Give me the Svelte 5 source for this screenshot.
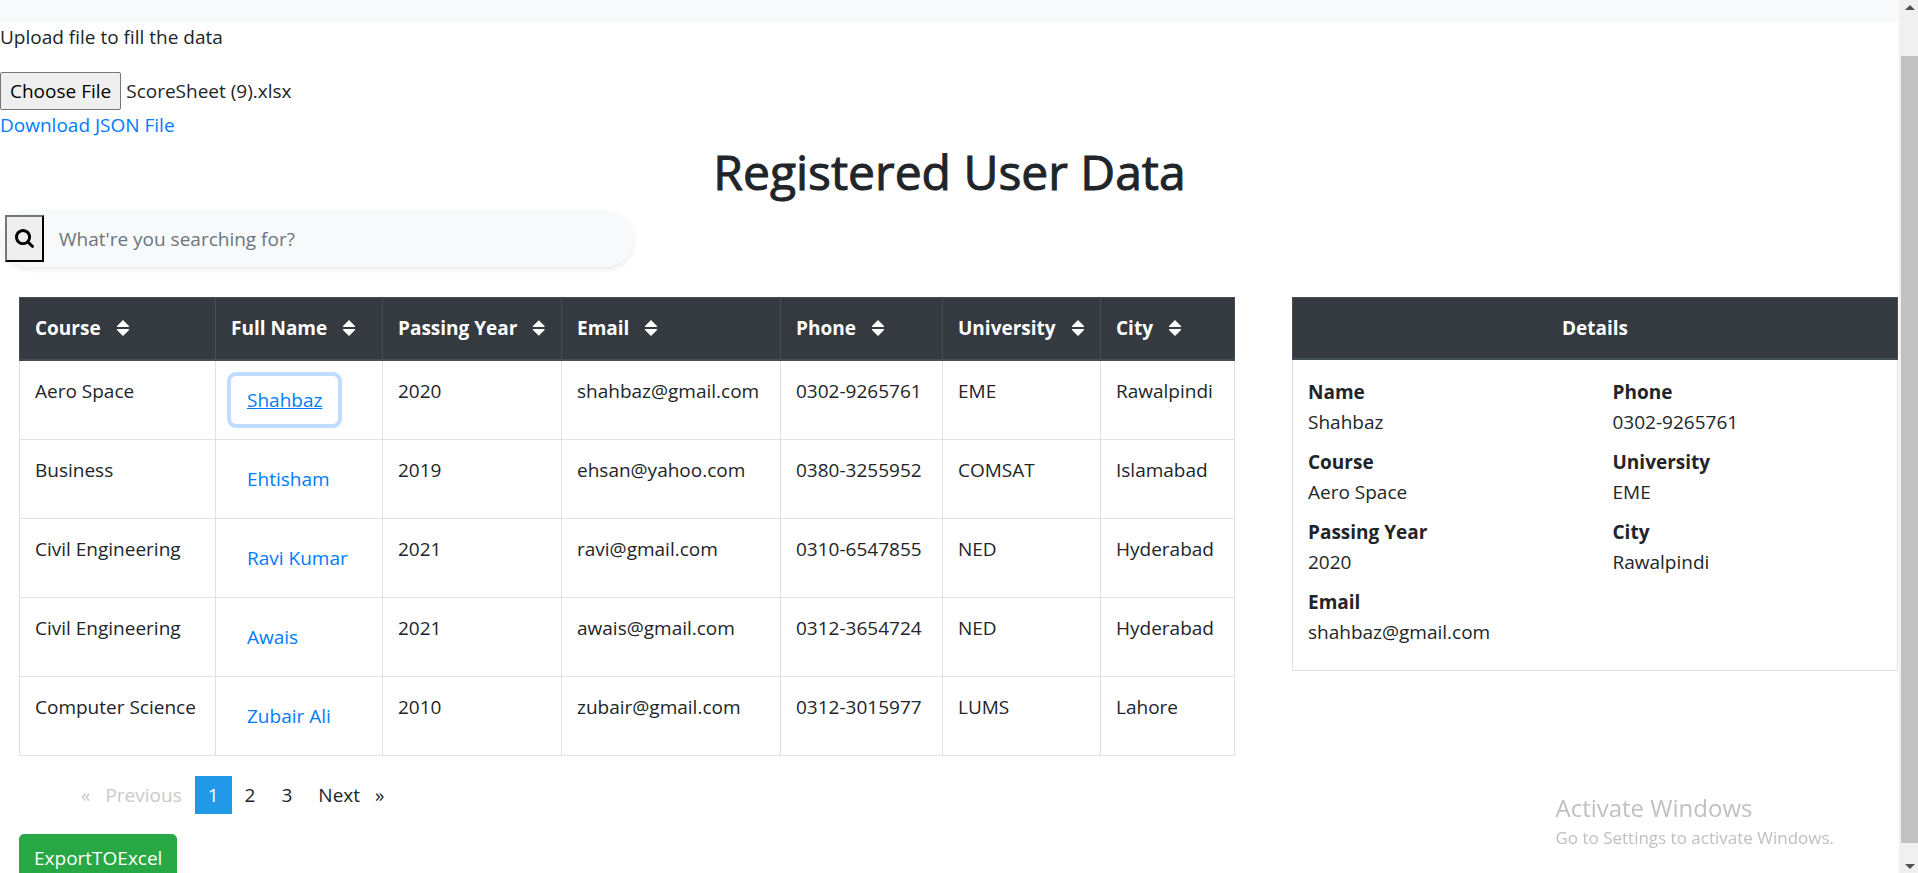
<script>
  import { onMount } from 'svelte';

  const columns = ['Course', 'Full Name', 'Passing Year', 'Email', 'Phone', 'University', 'City'];

  const users = [
    { course: 'Aero Space', name: 'Shahbaz', year: '2020', email: 'shahbaz@gmail.com', phone: '0302-9265761', university: 'EME', city: 'Rawalpindi' },
    { course: 'Business', name: 'Ehtisham', year: '2019', email: 'ehsan@yahoo.com', phone: '0380-3255952', university: 'COMSAT', city: 'Islamabad' },
    { course: 'Civil Engineering', name: 'Ravi Kumar', year: '2021', email: 'ravi@gmail.com', phone: '0310-6547855', university: 'NED', city: 'Hyderabad' },
    { course: 'Civil Engineering', name: 'Awais', year: '2021', email: 'awais@gmail.com', phone: '0312-3654724', university: 'NED', city: 'Hyderabad' },
    { course: 'Computer Science', name: 'Zubair Ali', year: '2010', email: 'zubair@gmail.com', phone: '0312-3015977', university: 'LUMS', city: 'Lahore' }
  ];

  let selectedIndex = $state(0);
  let page = $state(1);
  let query = $state('');
  let fileInput;

  const selected = $derived(users[selectedIndex]);

  const details = $derived([
    ['Name', selected.name],
    ['Phone', selected.phone],
    ['Course', selected.course],
    ['University', selected.university],
    ['Passing Year', selected.year],
    ['City', selected.city],
    ['Email', selected.email]
  ]);

  onMount(() => {
    const transfer = new DataTransfer();
    transfer.items.add(new File([''], 'ScoreSheet (9).xlsx'));
    fileInput.files = transfer.files;
  });
</script>

<div class="window">
  <main class="page">
    <div class="topbar"></div>

    <section class="upload">
      <label for="sheet">Upload file to fill the data</label>
      <input id="sheet" type="file" bind:this={fileInput} />
      <a class="download" href="#json">Download JSON File</a>
    </section>

    <h1>Registered User Data</h1>

    <form class="search" onsubmit={(e) => e.preventDefault()}>
      <button type="submit" aria-label="Search">
        <svg viewBox="0 0 1664 1664" width="19" height="19" aria-hidden="true">
          <path d="M1152 704q0-185-131.500-316.500T704 256 387.500 387.500 256 704t131.500 316.500T704 1152t316.500-131.500T1152 704zm512 832q0 52-38 90t-90 38q-54 0-90-38l-343-342q-179 124-399 124-143 0-273.500-55.500t-225-150-150-225T0 704t55.500-273.500 150-225 225-150T704 0t273.500 55.500 225 150 150 225T1408 704q0 220-124 399l343 343q37 37 37 90z" />
        </svg>
      </button>
      <input type="search" aria-label="Search users" placeholder="What're you searching for?" bind:value={query} />
    </form>

    <div class="content">
      <section class="list">
        <table class="users">
          <colgroup>
            {#each columns as column (column)}<col />{/each}
          </colgroup>
          <thead>
            <tr>
              {#each columns as column (column)}
                <th>
                  <span class="sortable">
                    {column}
                    <svg viewBox="0 0 14 16" width="14" height="16" aria-hidden="true">
                      <path d="M7 0 13 6Q13.400 7 12.500 7H1.500Q.600 7 1 6ZM7 16 13 10Q13.400 9 12.500 9H1.500Q.600 9 1 10Z" />
                    </svg>
                  </span>
                </th>
              {/each}
            </tr>
          </thead>
          <tbody>
            {#each users as user, index (user.phone)}
              <tr>
                <td>{user.course}</td>
                <td>
                  <button class="name" class:active={index === selectedIndex} onclick={() => (selectedIndex = index)}>{user.name}</button>
                </td>
                <td>{user.year}</td>
                <td>{user.email}</td>
                <td>{user.phone}</td>
                <td>{user.university}</td>
                <td>{user.city}</td>
              </tr>
            {/each}
          </tbody>
        </table>

        <nav class="pagination" aria-label="Pages">
          <button class="step" disabled><span class="mark">«</span>Previous</button>
          {#each [1, 2, 3] as number (number)}
            <button class:current={number === page} onclick={() => (page = number)}>{number}</button>
          {/each}
          <button class="step">Next<span class="mark">»</span></button>
        </nav>

        <button class="export">ExportTOExcel</button>
      </section>

      <section class="card">
        <h2>Details</h2>
        <dl>
          {#each details as [term, value] (term)}
            <div>
              <dt>{term}</dt>
              <dd>{value}</dd>
            </div>
          {/each}
        </dl>
      </section>
    </div>
  </main>

  <div class="scrollbar" aria-hidden="true">
    <svg viewBox="0 0 10 5" width="10" height="5"><path d="M5 0 10 5H0Z" /></svg>
    <div class="thumb"></div>
    <svg viewBox="0 0 10 5" width="10" height="5"><path d="M0 0H10L5 5Z" /></svg>
  </div>

  <aside class="watermark">
    <strong>Activate Windows</strong>
    <span>Go to Settings to activate Windows.</span>
  </aside>
</div>

<style>
  :global(body) {
    margin: 0;
    background: #fff;
  }

  .window,
  .window * {
    box-sizing: border-box;
  }

  .window {
    display: flex;
    height: 100vh;
    overflow: hidden;
    color: #212529;
    font: 400 19px/30px 'Open Sans', 'Noto Sans', sans-serif;
  }

  button,
  input {
    font: inherit;
  }

  .page {
    flex: 1;
    min-width: 0;
    overflow: hidden;
  }

  .topbar {
    height: 22px;
    background: #f8f9fa;
  }

  .upload {
    display: flex;
    flex-direction: column;
    align-items: flex-start;
  }

  .upload label {
    margin-bottom: 20px;
  }

  .upload input {
    width: 420px;
    height: 38px;
    color: #212529;
  }

  .upload input::file-selector-button {
    height: 38px;
    margin: 0 5px 0 0;
    padding: 0 9px;
    border: 1px solid #767676;
    border-radius: 2px;
    background: #efefef;
    color: #000;
    font: inherit;
  }

  a {
    color: #007bff;
    text-decoration: none;
  }

  h1 {
    margin: 2px 0 8px;
    text-align: center;
    font-size: 48px;
    font-weight: 500;
    line-height: 60px;
    -webkit-text-stroke: 1px currentColor;
  }

  .search {
    display: flex;
    width: 33.4%;
    height: 57px;
    padding: 5px;
    border-radius: 29px;
    background: #f8f9fa;
    box-shadow: 0 3px 5px rgba(0, 0, 0, 0.075);
  }

  .search button {
    display: flex;
    align-items: center;
    justify-content: center;
    width: 39px;
    padding: 0;
    border: 2px outset #000;
    border-color: #767676 #212121 #212121 #767676;
    background: #efefef;
  }

  .search input {
    flex: 1;
    min-width: 0;
    padding: 0 15px;
    border: 0;
    outline: 0;
    background: transparent;
    color: #495057;
  }

  .search input::placeholder {
    color: #6c757d;
    opacity: 1;
  }

  .content {
    display: grid;
    grid-template-columns: 2fr 1fr;
    align-items: start;
    gap: 57px;
    padding: 30px 1px 0 19px;
  }

  .users {
    width: 100%;
    table-layout: fixed;
    border-collapse: collapse;
  }

  col:nth-child(1) { width: 196px; }
  col:nth-child(2) { width: 167px; }
  col:nth-child(3) { width: 179px; }
  col:nth-child(4) { width: 219px; }
  col:nth-child(5) { width: 162px; }
  col:nth-child(6) { width: 158px; }
  col:nth-child(7) { width: 134px; }

  th,
  td {
    padding: 15px;
    border: 1px solid #dee2e6;
    text-align: left;
    vertical-align: top;
    white-space: nowrap;
  }

  th {
    height: 62px;
    border-color: #454d55;
    border-bottom-width: 2px;
    background: #343a40;
    color: #fff;
    font-weight: 700;
    vertical-align: middle;
  }

  td {
    height: 79px;
  }

  .sortable {
    display: flex;
    align-items: center;
    gap: 15px;
  }

  .sortable svg {
    fill: #fff;
  }

  .name {
    display: block;
    height: 48px;
    padding: 0 15px;
    border: 1px solid transparent;
    border-radius: 5px;
    background: transparent;
    color: #007bff;
  }

  .name.active {
    box-shadow: 0 0 0 4px #bfdeff;
    text-decoration: underline;
  }

  .pagination {
    display: flex;
    margin: 20px 0;
    padding-left: 49px;
  }

  .pagination button {
    height: 38px;
    padding: 0 13px;
    border: 0;
    background: transparent;
    color: #212529;
  }

  .pagination .step {
    display: flex;
    align-items: center;
    gap: 15px;
  }

  .pagination button:disabled {
    color: #cacaca;
  }

  .pagination .current {
    background: #2199e8;
    color: #fff;
  }

  .export {
    height: 48px;
    padding: 0 14px;
    border: 1px solid #28a745;
    border-radius: 5px;
    background: #28a745;
    color: #fff;
  }

  .card {
    border: 1px solid #dee2e6;
    border-top: 0;
  }

  h2 {
    margin: 0 -1px;
    padding: 15px;
    border: 1px solid #454d55;
    border-bottom-width: 2px;
    background: #343a40;
    color: #fff;
    text-align: center;
    font-size: 19px;
    font-weight: 700;
    line-height: 30px;
  }

  dl {
    display: grid;
    grid-template-columns: 1fr 1fr;
    row-gap: 10px;
    margin: 0;
    padding: 17px 0 23px 15px;
    column-gap: 20px;
  }

  dt {
    font-weight: 700;
  }

  dd {
    margin: 0;
  }

  .scrollbar {
    display: flex;
    flex-direction: column;
    align-items: center;
    width: 19px;
    padding: 5px 0 4px 2px;
    background: #f0f0f0;
  }

  .scrollbar svg {
    flex: none;
    fill: #505050;
  }

  .thumb {
    flex: 1;
    width: 100%;
    margin: 46px 0 21px;
    background: #c1c1c1;
  }

  .watermark {
    position: fixed;
    right: 84px;
    bottom: 20px;
    display: flex;
    flex-direction: column;
    color: #c0c0c0;
    font-size: 17px;
  }

  .watermark strong {
    font-size: 24px;
    font-weight: 400;
  }
</style>
